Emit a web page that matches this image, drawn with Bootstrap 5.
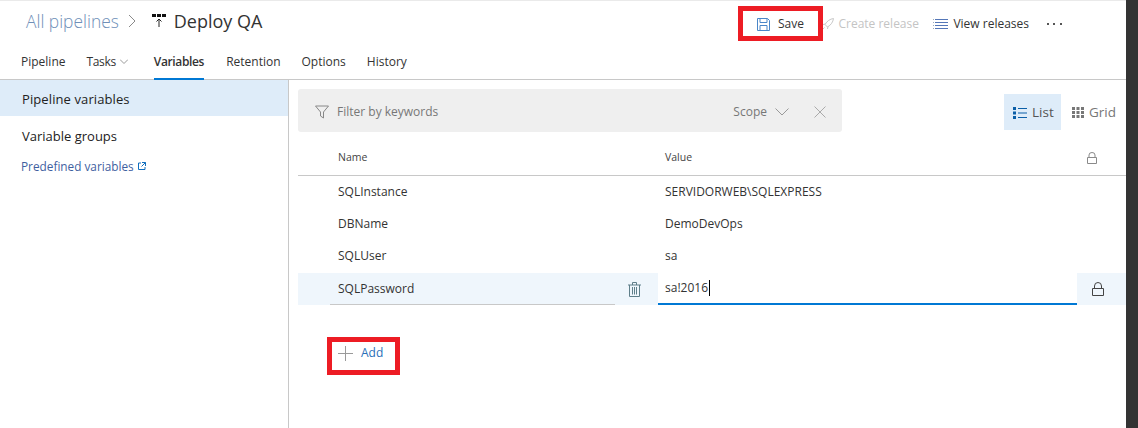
<!DOCTYPE html>
<html lang="en">
<head>
    <meta charset="UTF-8">
    <title>Deploy QA - Variables</title>
    <link href="https://cdn.jsdelivr.net/npm/bootstrap@5.3.2/dist/css/bootstrap.min.css" rel="stylesheet" />
    <style>
        html, body { height: 428px; overflow: hidden; }
        body { font-family: "Open Sans", "Liberation Sans", sans-serif; font-size: 12px; color: #333; background: #fff; }
        .shell { height: 428px; position: relative; }
        .side-strip { width: 12px; background: #333; flex: none; }
        .page-main { flex: 1; min-width: 0; border-top: 1px solid #eaeaea; }

        .title-row { height: 42px; padding: 0 0 2px 26px; }
        .crumb { font-size: 17.4px; color: #6f8fb8; font-weight: 300; }
        .crumb-sep { margin: 0 16px 0 9px; }
        .pipe-name { font-size: 18px; color: #333; margin-left: 8px; }
        .cmd-bar { margin-left: auto; padding-right: 64px; margin-top: 6px; }
        .cmd { display: flex; align-items: center; color: #333; }
        .cmd-save { width: 47px; margin-right: 18px; justify-content: space-between; }
        .cmd-off { color: #c4c4c4; width: 97px; margin-right: 14px; justify-content: space-between; }
        .cmd-view { width: 96px; justify-content: space-between; margin-right: 18px; }

        .tab-row { height: 37px; padding-left: 21px; gap: 21px; border-bottom: 1px solid #c8c8c8; }
        .tab-item { color: #333; line-height: 37px; height: 37px; text-decoration: none; }
        .tab-narrow { letter-spacing: -.35px; }
        .tab-on { font-weight: 600; letter-spacing: -.35px; border-bottom: 2px solid #0078d4; margin-left: 5px; margin-right: 1px; }

        .body-row { height: 348px; }
        .left-nav { width: 289px; flex: none; border-right: 1px solid #c8c8c8; font-size: 13px; color: #222; }
        .nav-on { background: #deecf9; height: 36px; line-height: 38px; padding-left: 22px; letter-spacing: .1px; }
        .nav-plain { height: 40px; line-height: 40px; padding-left: 22px; }
        .nav-ext { color: #3f5f9f; font-size: 11.8px; padding-left: 21px; line-height: 20px; }

        .content-pane { flex: 1; min-width: 0; padding: 9px 0 0 9px; }
        .filter-row { height: 43px; }
        .filter-box { width: 544px; height: 43px; background: #efefef; border-radius: 3px; padding: 2px 0 0 17px; color: #777; }
        .filter-scope { margin-left: auto; }
        .x-mark { margin: 0 16px 0 25px; }
        .view-on { width: 57px; height: 36px; margin-left: auto; background: #deecf9; font-size: 13.5px; color: #555; margin-top: 5px; padding: 1px 0 0 9px; gap: 5px; }
        .view-off { font-size: 13.5px; color: #777; width: 65px; height: 36px; margin-top: 5px; padding: 1px 0 0 11px; gap: 5px; }

        .var-head, .var-row { display: flex; align-items: center; }
        .var-head { height: 44px; padding-top: 8px; border-bottom: 1px solid #c8c8c8; font-size: 10.5px; color: #444; }
        .var-row { height: 32px; color: #333; }
        .cell-name { width: 360px; padding-left: 40px; flex: none; }
        .cell-value { flex: 1; padding-left: 7px; }
        .cell-lock { width: 48px; flex: none; text-align: center; padding-right: 20px; }
        .var-active { height: 32px; margin-top: 1px; background: #eff6fc; align-items: stretch; }
        .name-edit { width: 285px; margin-left: 32px; padding-left: 8px; border-bottom: 1px solid #c8c8c8; display: flex; align-items: center; }
        .trash-slot { width: 43px; padding-right: 4px; display: flex; align-items: center; justify-content: center; }
        .value-edit { flex: 1; background: #fff; border-bottom: 2px solid #0078d4; padding-left: 7px; display: flex; align-items: center; }
        .caret-bar { width: 1px; height: 16px; background: #000; margin-left: 1px; }
        .lock-slot { width: 48px; flex: none; margin-left: 1px; padding-right: 8px; display: flex; align-items: center; justify-content: center; }
        .add-row { margin: 31px 0 0 40px; color: #2a6fb8; gap: 8px; height: 34px; }

        .red-mark { position: absolute; border: 5px solid #ed1c24; pointer-events: none; }
        .mark-save { left: 738px; top: 6px; width: 85px; height: 35px; }
        .mark-add { left: 327px; top: 337px; width: 73px; height: 38px; }
    </style>
</head>
<body>
<div class="shell d-flex">
    <div class="page-main">
        <div class="title-row d-flex align-items-center">
            <span class="crumb">All pipelines</span>
            <svg class="crumb-sep" width="8" height="14" viewBox="0 0 8 14"><path d="M1 1l6 6-6 6" fill="none" stroke="#8a8a8a"/></svg>
            <svg width="14" height="14" viewBox="0 0 14 14"><path d="M0 0h4v3H0zM5 0h4v3H5zM10 0h4v3h-4z" fill="#111"/><path d="M7 13V5M4.500 7.500L7 5l2.500 2.500" fill="none" stroke="#222"/></svg>
            <span class="pipe-name">Deploy QA</span>
            <div class="cmd-bar d-flex align-items-center">
                <div class="cmd cmd-save">
                    <svg width="13" height="13" viewBox="0 0 13 13"><path d="M.5.5h10l2 2v10H.5z" fill="none" stroke="#4a86c8"/><path d="M3 .5v4h7v-4M3 12.500v-5h7v5" fill="none" stroke="#4a86c8"/></svg>
                    <span>Save</span>
                </div>
                <div class="cmd cmd-off">
                    <svg width="12" height="12" viewBox="0 0 12 12"><path d="M11.500.5C8 1 5 3 3 6.500l2.500 2.500C9 7 11 4 11.500.5zM3.500 6l-2.500.5M6 8.500L5.500 11M2.500 9.500l-1.500 1.500" fill="none" stroke="#c8c8c8"/></svg>
                    <span>Create release</span>
                </div>
                <div class="cmd cmd-view">
                    <svg width="15" height="10" viewBox="0 0 15 10"><path d="M2 .5h13M2 3.500h13M2 6.500h13M2 9.500h13" stroke="#5577b8"/><path d="M0 .5h1M0 3.500h1M0 6.500h1M0 9.500h1" stroke="#9ab"/></svg>
                    <span>View releases</span>
                </div>
                <svg width="15" height="3" viewBox="0 0 15 3"><path d="M0 0h2v2H0zM6 0h2v2H6zM13 0h2v2h-2z" fill="#555"/></svg>
            </div>
        </div>
        <div class="tab-row d-flex">
            <a class="tab-item">Pipeline</a>
            <a class="tab-item tab-narrow d-flex align-items-center">Tasks
                <svg class="ms-1" width="8" height="5" viewBox="0 0 8 5"><path d="M0 .5l4 4 4-4" fill="none" stroke="#999"/></svg></a>
            <a class="tab-item tab-on">Variables</a>
            <a class="tab-item">Retention</a>
            <a class="tab-item">Options</a>
            <a class="tab-item">History</a>
        </div>
        <div class="body-row d-flex">
            <div class="left-nav">
                <div class="nav-on">Pipeline variables</div>
                <div class="nav-plain">Variable groups</div>
                <div class="nav-ext d-flex align-items-center gap-1">Predefined variables
                    <svg width="8" height="8" viewBox="0 0 8 8"><path d="M3 1H.5v6.500h6.500V5M4 .5h3.500V4M7.500.5L3.500 4.500" fill="none" stroke="#106ebe"/></svg>
                </div>
            </div>
            <div class="content-pane">
                <div class="filter-row d-flex">
                    <div class="filter-box d-flex align-items-center">
                        <svg width="14" height="14" viewBox="0 0 14 14"><path d="M.5 1h13L8.500 7v6l-3-2V7z" fill="none" stroke="#888"/></svg>
                        <span class="ms-2">Filter by keywords</span>
                        <span class="filter-scope">Scope</span>
                        <svg class="ms-2" width="14" height="8" viewBox="0 0 14 8"><path d="M.5.5L7 7l6.500-6.500" fill="none" stroke="#999"/></svg>
                        <svg class="x-mark" width="12" height="12" viewBox="0 0 12 12"><path d="M.5.5l11 11M11.500.5l-11 11" stroke="#aaa"/></svg>
                    </div>
                    <div class="view-on d-flex align-items-center">
                        <svg width="14" height="12" viewBox="0 0 14 12"><path d="M0 0h3v3H0zM0 4.500h3v3H0zM0 9h3v3H0z" fill="#0b5fa8"/><path d="M5 1.500h9M5 6h9M5 10.500h9" stroke="#0b5fa8"/></svg>
                        <span>List</span>
                    </div>
                    <div class="view-off d-flex align-items-center">
                        <svg width="12" height="11" viewBox="0 0 12 11"><path d="M0 0h3v3H0zM4.500 0h3v3h-3zM9 0h3v3H9zM0 4h3v3H0zM4.500 4h3v3h-3zM9 4h3v3H9zM0 8h3v3H0zM4.500 8h3v3h-3zM9 8h3v3H9z" fill="#777"/></svg>
                        <span>Grid</span>
                    </div>
                </div>
                <div class="var-head">
                    <div class="cell-name">Name</div>
                    <div class="cell-value">Value</div>
                    <div class="cell-lock">
                        <svg width="10" height="12" viewBox="0 0 10 12"><path d="M.5 5.500h9v6h-9zM2 5.500V3a3 2.500 0 0 1 6 0v2.500" fill="none" stroke="#8a8a8a"/></svg>
                    </div>
                </div>
                <div class="var-row"><div class="cell-name">SQLInstance</div><div class="cell-value">SERVIDORWEB\SQLEXPRESS</div></div>
                <div class="var-row"><div class="cell-name">DBName</div><div class="cell-value">DemoDevOps</div></div>
                <div class="var-row"><div class="cell-name">SQLUser</div><div class="cell-value">sa</div></div>
                <div class="var-row var-active">
                    <div class="name-edit">SQLPassword</div>
                    <div class="trash-slot">
                        <svg width="13" height="15" viewBox="0 0 13 15"><path d="M0 3h13M4.500 3V.5h4V3M1.500 3v11.500h10V3M4.500 5v7.500M6.500 5v7.500M8.500 5v7.500" fill="none" stroke="#5f7f8a"/></svg>
                    </div>
                    <div class="value-edit">sa!2016<span class="caret-bar"></span></div>
                    <div class="lock-slot">
                        <svg width="12" height="14" viewBox="0 0 12 14"><path d="M.5 6.500h11v7H.5zM2.500 6.500V4a3.500 3.500 0 0 1 7 0v2.500" fill="none" stroke="#444"/></svg>
                    </div>
                </div>
                <div class="add-row d-flex align-items-center">
                    <svg width="15" height="15" viewBox="0 0 15 15"><path d="M7.500 0v15M0 7.500h15" stroke="#9a9a9a"/></svg>
                    <span>Add</span>
                </div>
            </div>
        </div>
    </div>
    <div class="side-strip"></div>
    <div class="red-mark mark-save"></div>
    <div class="red-mark mark-add"></div>
</div>
<script src="https://cdn.jsdelivr.net/npm/bootstrap@5.3.2/dist/js/bootstrap.bundle.min.js"></script>
</body>
</html>
